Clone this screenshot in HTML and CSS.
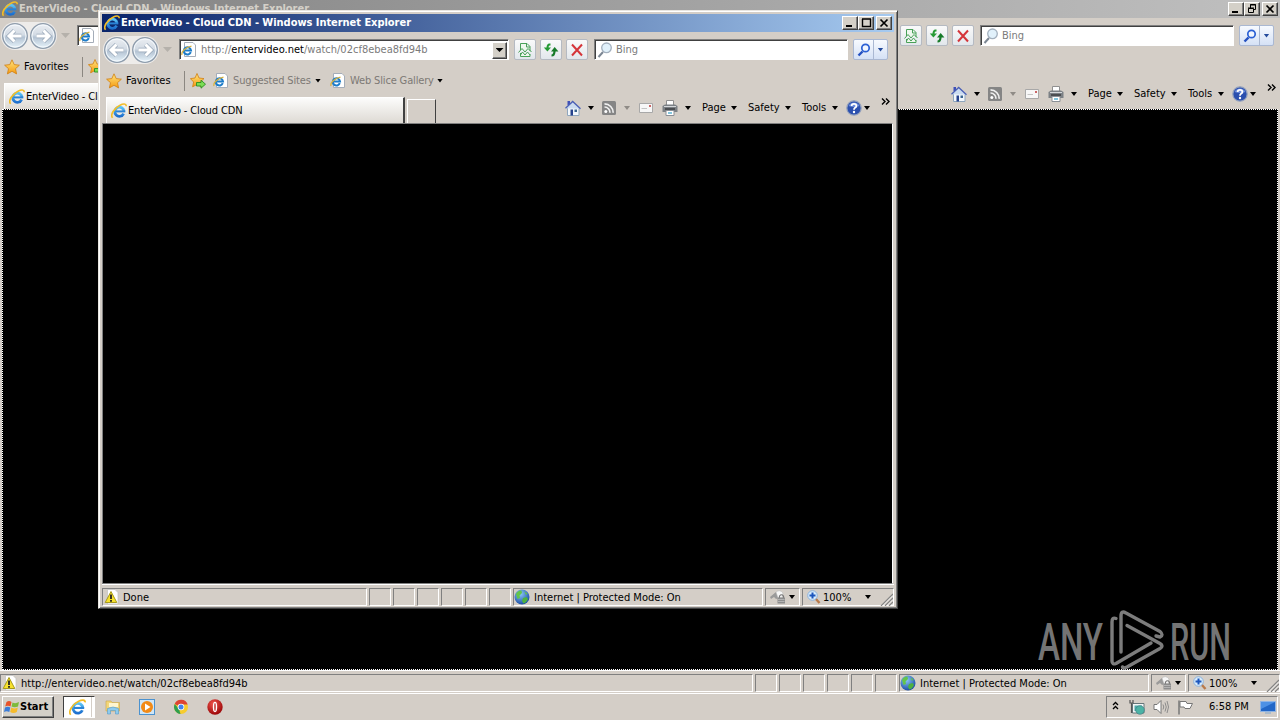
FILE: index.html
```html
<!DOCTYPE html>
<html lang="en">
  <head>
    <meta charset="UTF-8" />
    <title>EnterVideo - Cloud CDN</title>
    <link rel="stylesheet" href="styles.css">
  </head>
  <body>
    <svg class="sprite" xmlns="http://www.w3.org/2000/svg">
      <defs>
        <linearGradient id="blue" x1="0" y1="0" x2="0" y2="1">
          <stop offset="0" stop-color="#5bc4f5" />
          <stop offset="1" stop-color="#1d6fce" />
        </linearGradient>
        <linearGradient id="glass" x1="0" y1="0" x2="0" y2="1">
          <stop offset="0" stop-color="#eceff3" />
          <stop offset="0.45" stop-color="#d3dbe4" />
          <stop offset="0.55" stop-color="#b4c3d3" />
          <stop offset="1" stop-color="#e8f5fc" />
        </linearGradient>
        <linearGradient id="gold" x1="0" y1="0" x2="0" y2="1">
          <stop offset="0" stop-color="#ffe680" />
          <stop offset="1" stop-color="#f59a10" />
        </linearGradient>
        <radialGradient id="red" cx="0.4" cy="0.3" r="0.7">
          <stop offset="0" stop-color="#f0564c" />
          <stop offset="1" stop-color="#9c0608" />
        </radialGradient>
        <radialGradient id="globe" cx="0.4" cy="0.3" r="0.7">
          <stop offset="0" stop-color="#8cc8f8" />
          <stop offset="1" stop-color="#1d4fa6" />
        </radialGradient>
      </defs>
      <symbol id="ie" viewBox="0 0 16 16">
        <path d="M12.600 10.600A4.600 4.600 0 1 1 13 8.400" fill="none" stroke="url(#blue)" stroke-width="2.700" />
        <path d="M4.600 8.400H14.300" stroke="#2a83d6" stroke-width="2" />
        <path d="M1.600 14.800C-1 12 3 5 9 2.200C12 .6 15.300.2 15.200 3.200" fill="none" stroke="#f3bd27" stroke-width="1.600" />
      </symbol>
      <symbol id="iepage" viewBox="0 0 16 16">
        <path d="M3.500 .5H12L14.500 3V14.500H3.500Z" fill="#fff" stroke="#a5adb8" />
        <path d="M9.800 10.200A3.600 3.600 0 1 1 10 8.400H4" fill="none" stroke="#1d7cc9" stroke-width="2" />
        <path d="M1 13C0 10 4 5.500 10.500 4.200" fill="none" stroke="#d9b23c" stroke-width="1.200" />
      </symbol>
      <symbol id="star" viewBox="0 0 16 16">
        <path d="M8 .8L10.200 5.600L15.400 6.200L11.500 9.700L12.600 14.900L8 12.300L3.400 14.900L4.500 9.700L.6 6.200L5.800 5.600Z" fill="url(#gold)" stroke="#d07f12" stroke-width=".8" />
      </symbol>
      <symbol id="addstar" viewBox="0 0 16 16">
        <path d="M7 .5L9 5L14 5.600L10.400 9L11.400 13.800L7 11.500L2.600 13.800L3.600 9L.4 5.600L5 5Z" fill="url(#gold)" stroke="#d07f12" stroke-width=".8" />
        <path d="M6.500 9.500H11V7.200L15.500 11.200L11 15.200V13H6.500Z" fill="#7bdc54" stroke="#2b8f22" stroke-width=".9" />
      </symbol>
      <symbol id="back" viewBox="0 0 28 28">
        <circle cx="14" cy="14" r="12.300" fill="url(#glass)" stroke="#8d9bab" stroke-width="1.300" />
        <circle cx="14" cy="14" r="11" fill="none" stroke="#f4f9fd" stroke-width="1" />
        <path d="M13.500 8.500L8 14L13.500 19.500M8.500 14H20.500" fill="none" stroke="#98a7b8" stroke-width="4.400" />
        <path d="M13.500 8.500L8 14L13.500 19.500M8.500 14H20.500" fill="none" stroke="#fff" stroke-width="3" />
      </symbol>
      <symbol id="broken" viewBox="0 0 16 16">
        <path d="M3.500 8V1.500H10L13 4.500V9M9.500 1.500V5H13M3.500 11V14.500H13V12" fill="#eef8ee" stroke="#49a158" />
        <path d="M1.500 10.500L5 6.500L8 10L11 6.500L14.500 10M3.500 13L5.500 10L8 13L10.500 10L13 13" fill="none" stroke="#49a158" />
      </symbol>
      <symbol id="refresh" viewBox="0 0 16 16">
        <path d="M7.500 2.500H6.500Q4.500 2.500 4.500 6" fill="none" stroke="#279b35" stroke-width="2" />
        <path d="M.8 5.500H8L4.400 9.500Z" fill="#279b35" />
        <path d="M8.500 13.500Q11.500 13.500 11.500 9" fill="none" stroke="#167a28" stroke-width="2.200" />
        <path d="M8 9.500L11.700 5L15.400 9.500Z" fill="#167a28" />
      </symbol>
      <symbol id="stop" viewBox="0 0 16 16">
        <path d="M3 2.500L13 13.500M13 2.500L3 13.500" fill="none" stroke="#d5353a" stroke-width="2" />
      </symbol>
      <symbol id="lens" viewBox="0 0 16 16">
        <path d="M6 10L1.500 15" stroke="#7c8794" stroke-width="2" />
        <circle cx="9.500" cy="5.800" r="4.800" fill="#e1f1fb" stroke="#a3b0be" stroke-width="1.300" />
      </symbol>
      <symbol id="find" viewBox="0 0 16 16">
        <path d="M6.500 9.500L2.500 13.500" stroke="#2450c0" stroke-width="2.400" />
        <circle cx="9.500" cy="6" r="3.700" fill="#f1f6ff" stroke="#2b60d4" stroke-width="1.700" />
      </symbol>
      <symbol id="home" viewBox="0 0 16 16">
        <path d="M2.500 7.500H14V15.500H2.500Z" fill="#f2f7fc" stroke="#8fa6bd" />
        <path d="M2.500 1H5V5H2.500Z" fill="#3e50b8" />
        <path d="M.5 8.300L7.700 1.500L15.500 8.800" fill="#cbdcf0" stroke="#4a5fb5" stroke-width="1.300" />
        <path d="M5.500 9.500H8V15.500H5.500Z" fill="#26428d" />
        <path d="M9.500 9.500H12V12H9.500Z" fill="#39638f" />
      </symbol>
      <symbol id="rss" viewBox="0 0 16 16">
        <rect x="1" y="1" width="14" height="14" rx="1.500" fill="#858585" />
        <circle cx="4.800" cy="11.500" r="1.500" fill="#fff" />
        <path d="M3.500 7A5.500 5.500 0 0 1 9 12.800M3.500 3.800A8.800 8.800 0 0 1 12.200 12.800" fill="none" stroke="#f0f0f0" stroke-width="1.700" />
      </symbol>
      <symbol id="mail" viewBox="0 0 16 16">
        <path d="M1.500 3.500H14.500V12.500H1.500Z" fill="#f7f7f7" stroke="#a8a8a8" />
        <path d="M11 5H13V7H11Z" fill="#c66" />
        <path d="M3.500 8.500H9" stroke="#c4c4c4" />
      </symbol>
      <symbol id="printer" viewBox="0 0 16 16">
        <path d="M4.500 .5H11.500V6H4.500Z" fill="#fff" stroke="#909090" />
        <path d="M.5 6L3 4.500H13L15.500 6V12H.5Z" fill="#7b8085" />
        <path d="M2 6.500H14" stroke="#d5d8db" />
        <path d="M3 9H13" stroke="#3b3e42" stroke-width="1.500" />
        <path d="M4 10.500H12V15.500H4Z" fill="#fff" stroke="#8b9096" />
        <path d="M6 13H10" stroke="#5db3d5" stroke-width="1.500" />
      </symbol>
      <symbol id="help" viewBox="0 0 16 16">
        <circle cx="8" cy="8" r="7.200" fill="#2b4fae" stroke="#93a1bd" stroke-width="1.200" />
        <path d="M2.500 6A6 6 0 0 1 13.500 6Q8 8 2.500 6" fill="#6d8ddb" />
        <path d="M5.600 6Q5.600 3.800 8 3.800T10.400 6Q10.400 7 9 7.800Q8 8.500 8 9.800" fill="none" stroke="#fff" stroke-width="1.800" />
        <circle cx="8" cy="12" r="1.200" fill="#fff" />
      </symbol>
      <symbol id="warn" viewBox="0 0 16 16">
        <path d="M4.500 .5H12L15 3.500V15H4.500Z" fill="#fff" stroke="#c0c0c0" stroke-width=".7" />
        <path d="M8 2.500L13.800 13.500H2.200Z" fill="#f7e12c" stroke="#a79a1c" />
        <path d="M8 5.500V10M8 11V12.700" stroke="#222" stroke-width="1.800" />
      </symbol>
      <symbol id="earth" viewBox="0 0 16 16">
        <circle cx="8" cy="8" r="7.500" fill="url(#globe)" />
        <path d="M2 5Q4 1 7.500 1.500L8 4L5.500 6.500L6 9L3.500 10Z" fill="#63c54a" />
        <path d="M9 9L12.500 8L14 10Q12 14 9.500 14.500L8 12Z" fill="#4db140" />
        <path d="M10.500 2.500L13.500 4.500L12 6Z" fill="#63c54a" />
      </symbol>
      <symbol id="lock" viewBox="0 0 18 16">
        <path d="M1 8L7 3L10 9L7 10L5 8L2 10Z" fill="#9a9a9a" />
        <path d="M7 3Q11 0 14 4L13 9H9Z" fill="#f7f7f7" stroke="#bbb" stroke-width=".6" />
        <path d="M10.500 9V7Q12.500 4.500 14.500 7V9" fill="none" stroke="#777" stroke-width="1.200" />
        <path d="M8.500 8.500H16V14.500H8.500Z" fill="#8d8d8d" />
        <path d="M9 10.500H15.500M9 12.500H15.500" stroke="#bcbcbc" stroke-width=".8" />
      </symbol>
      <symbol id="zoomin" viewBox="0 0 14 14">
        <path d="M8.500 8.500L12.500 13" stroke="#b97a4a" stroke-width="2.400" />
        <circle cx="5.500" cy="5.500" r="4.800" fill="#d7ebfb" stroke="#8cb2dc" />
        <path d="M5.500 2.500V8.500M2.500 5.500H8.500" stroke="#1c56bd" stroke-width="2" />
      </symbol>
      <symbol id="grip" viewBox="0 0 13 13">
        <path d="M1 13L13 1M5 13L13 5M9 13L13 9" stroke="#858585" stroke-width="1.300" />
        <path d="M2.500 13L13 2.500M6.500 13L13 6.500M10.500 13L13 10.500" stroke="#fff" stroke-width=".8" />
      </symbol>
    </svg>

    <div class="desktop">
      <!-- maximized window -->
      <div class="window main">
        <div class="titlebar inactive">
          <svg class="i16"><use href="#ie" /></svg>
          <span class="caption">EnterVideo - Cloud CDN - Windows Internet Explorer</span>
          <div class="controls">
            <button><svg viewBox="0 0 12 10"><path d="M2 8H8" stroke="#000" stroke-width="2" /></svg></button>
            <button><svg viewBox="0 0 12 10"><path d="M4.500 4V.5H9.500V5.500H7.500M4 1H10M2.500 4.500H7.500V8.500H2.500ZM2 4H8" fill="none" stroke="#000" /></svg></button>
            <button class="close"><svg viewBox="0 0 12 10"><path d="M2.500 1.500L9.500 8.500M9.500 1.500L2.500 8.500" stroke="#000" stroke-width="1.700" /></svg></button>
          </div>
        </div>
        <div class="navbar">
          <div class="travel">
            <svg><use href="#back" /></svg>
            <svg class="forward"><use href="#back" /></svg>
          </div>
          <i class="arrow dim"></i>
          <div class="address">
            <svg class="i16"><use href="#iepage" /></svg>
            <button class="drop"><i class="arrow"></i></button>
          </div>
          <button class="tool"><svg class="i16"><use href="#broken" /></svg></button>
          <button class="tool"><svg class="i16"><use href="#refresh" /></svg></button>
          <button class="tool"><svg class="i16"><use href="#stop" /></svg></button>
          <div class="search"><svg class="i16"><use href="#lens" /></svg><span>Bing</span></div>
          <button class="go"><svg class="i16"><use href="#find" /></svg><b><i class="arrow navy"></i></b></button>
        </div>
        <div class="favbar">
          <svg class="i16"><use href="#star" /></svg>
          <span class="favorites">Favorites</span>
          <svg class="i16"><use href="#addstar" /></svg>
        </div>
        <div class="tabrow">
          <div class="tab"><svg class="i16"><use href="#ie" /></svg><span>EnterVideo - Cloud CDN</span></div>
          <div class="newtab"></div>
          <div class="commands">
            <svg class="i16"><use href="#home" /></svg><i class="arrow a1"></i>
            <svg class="i16 c-rss"><use href="#rss" /></svg><i class="arrow a1 dim2"></i>
            <svg class="i16 c-mail"><use href="#mail" /></svg>
            <svg class="i16 c-print"><use href="#printer" /></svg><i class="arrow a2"></i>
            <span class="menu page-menu">Page</span><i class="arrow"></i>
            <span class="menu safety-menu">Safety</span><i class="arrow"></i>
            <span class="menu tools-menu">Tools</span><i class="arrow"></i>
            <svg class="i16 c-help"><use href="#help" /></svg><i class="arrow a3"></i>
            <svg class="more" viewBox="0 0 9 7"><path d="M1 .5L4 3.500L1 6.500M5 .5L8 3.500L5 6.500" fill="none" stroke="#000" stroke-width="1.400" /></svg>
          </div>
        </div>
        <div class="page"><div class="focus"></div></div>
        <div class="statusbar">
          <div class="cell message"><svg class="i16"><use href="#warn" /></svg><span class="link">http://entervideo.net/watch/02cf8ebea8fd94b</span></div>
          <div class="cell small"></div>
          <div class="cell small"></div>
          <div class="cell small"></div>
          <div class="cell small"></div>
          <div class="cell small"></div>
          <div class="cell small"></div>
          <div class="cell zone"><svg class="i16"><use href="#earth" /></svg><span>Internet | Protected Mode: On</span></div>
          <div class="cell protect"><svg><use href="#lock" /></svg><i class="arrow"></i></div>
          <div class="cell zoom"><svg class="i14"><use href="#zoomin" /></svg><span>100%</span><i class="arrow"></i><svg class="grip"><use href="#grip" /></svg></div>
        </div>
      </div>

      <!-- taskbar -->
      <div class="taskbar">
        <button class="start">
          <svg viewBox="0 0 16 16">
            <path d="M2.500 3Q5 1 7.500 3L6.500 7.500Q4 5.800 1.200 7.500Z" fill="#e8532a" />
            <path d="M8.500 3.500Q11.500 5 15 3L14 7.500Q10.500 9 7.500 7.500Z" fill="#7dba3c" />
            <path d="M1 8.500Q4 6.800 6.300 8.500L5.300 13Q2.500 11.300 0 13Z" fill="#3b7cd8" />
            <path d="M7.300 8.500Q10.500 10.300 13.800 8.500L12.800 13Q9.500 14.800 6.200 13Z" fill="#f6bb2c" />
          </svg>
          <span>Start</span>
        </button>
        <div class="task active"><div><svg><use href="#ie" /></svg></div></div>
        <div class="pinned">
          <svg viewBox="0 0 16 16">
            <path d="M1 2H6L7 3.500H14.500V12H1Z" fill="#f2d679" stroke="#caa648" stroke-width=".6" />
            <path d="M4 4H13V8H4Z" fill="#fff6cf" />
            <path d="M2.500 15V9.500Q8 6.500 13.500 9.500V15H10.500V11.500H5.500V15Z" fill="#8dcbee" stroke="#569bc9" stroke-width=".6" />
          </svg>
          <svg viewBox="0 0 16 16">
            <rect x=".5" y=".5" width="15" height="15" fill="#cfe6f7" stroke="#4b92cf" />
            <circle cx="8" cy="8" r="6" fill="#f28a16" />
            <path d="M6 4.500L11.500 8L6 11.500Z" fill="#fff" />
          </svg>
          <svg viewBox="0 0 16 16">
            <circle cx="8" cy="8" r="7" fill="#f7cc2e" />
            <path d="M8 8L1.700 5A7 7 0 0 1 14.700 5.500H8Z" fill="#dd4434" />
            <path d="M1.700 5L6 10L7.500 15A7 7 0 0 1 1.700 5Z" fill="#2f9e4f" />
            <circle cx="8" cy="8" r="3.300" fill="#fff" />
            <circle cx="8" cy="8" r="2.500" fill="#4384ee" />
          </svg>
          <svg viewBox="0 0 16 16">
            <circle cx="8" cy="8" r="7.700" fill="url(#red)" />
            <ellipse cx="8" cy="8" rx="2.200" ry="5.200" fill="#fff" />
            <ellipse cx="8" cy="8" rx=".8" ry="4" fill="#c43b36" />
          </svg>
        </div>
        <div class="tray">
          <svg class="up" viewBox="0 0 7 9"><path d="M1 4L3.500 1.500L6 4M1 8L3.500 5.500L6 8" fill="none" stroke="#000" stroke-width="1.300" /></svg>
          <svg class="net" viewBox="0 0 16 16">
            <path d="M3.500 4.500H15V14H3.500Z" fill="#f2f5f5" stroke="#65767a" />
            <path d="M5.500 6.500H13V12H5.500Z" fill="#4caaa9" />
            <circle cx="11" cy="11" r="4.300" fill="#4cb3a5" stroke="#39777f" stroke-width=".6" />
            <path d="M1 1V4H4V1M2.500 4V14" fill="none" stroke="#555" stroke-width="1.200" />
          </svg>
          <svg class="sound" viewBox="0 0 16 16">
            <path d="M1 5.500H4L8 1.500V14.500L4 10.500H1Z" fill="#fff" stroke="#777" />
            <path d="M10 5.500Q11.500 8 10 10.500M12 3.500Q14.500 8 12 12.500M14 2Q17 8 14 14" fill="none" stroke="#8b8b8b" />
          </svg>
          <svg class="flag" viewBox="0 0 16 16">
            <path d="M2 1.500V15.500" stroke="#777" stroke-width="1.500" />
            <path d="M3 2.500H9L10 4.500H15.500L13 9.500H8L7 8H3Z" fill="#fff" stroke="#777" />
          </svg>
          <span class="clock">6:58 PM</span>
          <svg class="show" viewBox="0 0 16 16">
            <path d="M.5 2.500H15.500V12.500H.5Z" fill="#2267c7" stroke="#8fb4e4" />
            <path d="M1 3H15L1 10Z" fill="#4d91e5" />
            <path d="M5 14H11" stroke="#9eb4cb" stroke-width="1.500" />
          </svg>
        </div>
      </div>

      <!-- watermark over the page -->
      <svg class="watermark" viewBox="0 0 204 68">
        <text x="5" y="53.500" textLength="65" lengthAdjust="spacingAndGlyphs">ANY</text>
        <g transform="translate(4 4)" fill="none" stroke="#7c7c7c" stroke-width="3.400" stroke-linejoin="round" stroke-linecap="round">
          <path d="M79 8.500Q75 7 75 12V51Q75 55 79 53.500L114 33" />
          <path d="M84 42V6Q84 0 89 3L123 21.500Q127 25 123 27L119 26" />
          <path d="M90 15.500L123 33.500Q127 36 123 38.500L90 57Q86 59 85.500 57" />
        </g>
        <text x="137" y="53.500" textLength="61" lengthAdjust="spacingAndGlyphs">RUN</text>
      </svg>

      <!-- popup window -->
      <div class="frame">
        <div class="window popup">
          <div class="titlebar">
            <svg class="i16"><use href="#ie" /></svg>
            <span class="caption">EnterVideo - Cloud CDN - Windows Internet Explorer</span>
            <div class="controls">
              <button><svg viewBox="0 0 12 10"><path d="M2 8H8" stroke="#000" stroke-width="2" /></svg></button>
              <button><svg viewBox="0 0 12 10"><path d="M2.500 1V8.500H10.500V1M2 1H11" fill="none" stroke="#000" stroke-width="1.400" /></svg></button>
              <button class="close"><svg viewBox="0 0 12 10"><path d="M2.500 1.500L9.500 8.500M9.500 1.500L2.500 8.500" stroke="#000" stroke-width="1.700" /></svg></button>
            </div>
          </div>
          <div class="navbar">
            <div class="travel">
              <svg><use href="#back" /></svg>
              <svg class="forward"><use href="#back" /></svg>
            </div>
            <i class="arrow dim"></i>
            <div class="address">
              <svg class="i16"><use href="#iepage" /></svg>
              <span class="link">http://<em>entervideo.net</em>/watch/02cf8ebea8fd94b</span>
              <button class="drop"><i class="arrow"></i></button>
            </div>
            <button class="tool"><svg class="i16"><use href="#broken" /></svg></button>
            <button class="tool"><svg class="i16"><use href="#refresh" /></svg></button>
            <button class="tool"><svg class="i16"><use href="#stop" /></svg></button>
            <div class="search"><svg class="i16"><use href="#lens" /></svg><span>Bing</span></div>
            <button class="go"><svg class="i16"><use href="#find" /></svg><b><i class="arrow navy"></i></b></button>
          </div>
          <div class="favbar">
            <svg class="i16"><use href="#star" /></svg>
            <span class="favorites">Favorites</span>
            <svg class="i16"><use href="#addstar" /></svg>
            <svg class="i16 site"><use href="#iepage" /></svg>
            <span class="sites">Suggested Sites</span><i class="arrow"></i>
            <svg class="i16 slice"><use href="#iepage" /></svg>
            <span class="gallery">Web Slice Gallery</span><i class="arrow"></i>
          </div>
          <div class="tabrow">
            <div class="tab"><svg class="i16"><use href="#ie" /></svg><span>EnterVideo - Cloud CDN</span></div>
            <div class="newtab"></div>
            <div class="commands">
              <svg class="i16"><use href="#home" /></svg><i class="arrow a1"></i>
              <svg class="i16 c-rss"><use href="#rss" /></svg><i class="arrow a1 dim2"></i>
              <svg class="i16 c-mail"><use href="#mail" /></svg>
              <svg class="i16 c-print"><use href="#printer" /></svg><i class="arrow a2"></i>
              <span class="menu page-menu">Page</span><i class="arrow"></i>
              <span class="menu safety-menu">Safety</span><i class="arrow"></i>
              <span class="menu tools-menu">Tools</span><i class="arrow"></i>
              <svg class="i16 c-help"><use href="#help" /></svg><i class="arrow a3"></i>
              <svg class="more" viewBox="0 0 9 7"><path d="M1 .5L4 3.500L1 6.500M5 .5L8 3.500L5 6.500" fill="none" stroke="#000" stroke-width="1.400" /></svg>
            </div>
          </div>
          <div class="page"></div>
          <div class="statusbar">
            <div class="cell message"><svg class="i16"><use href="#warn" /></svg><span>Done</span></div>
            <div class="cell small"></div>
            <div class="cell small"></div>
            <div class="cell small"></div>
            <div class="cell small"></div>
            <div class="cell small"></div>
            <div class="cell small"></div>
            <div class="cell zone"><svg class="i16"><use href="#earth" /></svg><span>Internet | Protected Mode: On</span></div>
            <div class="cell protect"><svg><use href="#lock" /></svg><i class="arrow"></i></div>
            <div class="cell zoom"><svg class="i14"><use href="#zoomin" /></svg><span>100%</span><i class="arrow"></i><svg class="grip"><use href="#grip" /></svg></div>
          </div>
        </div>
      </div>
    </div>
  </body>
</html>
```
FILE: styles.css
```css
* {
  box-sizing: border-box;
}
body {
  margin: 0;
  background: #000;
  color: #000;
  font-family: Tahoma, "DejaVu Sans Condensed", "DejaVu Sans", sans-serif;
  font-stretch: condensed;
  font-size: 11px;
  line-height: 14px;
  white-space: nowrap;
}
button {
  padding: 0;
  margin: 0;
  border: 0;
  font: inherit;
  color: inherit;
  background: #d4d0c8;
}
svg {
  display: block;
  flex: none;
}
.sprite {
  position: absolute;
  width: 0;
  height: 0;
}
.i16 {
  width: 16px;
  height: 16px;
}
.i14 {
  width: 14px;
  height: 14px;
}
.desktop {
  position: relative;
  width: 1280px;
  height: 720px;
  overflow: hidden;
  display: flex;
  flex-direction: column;
}
.window {
  display: flex;
  flex-direction: column;
  background: #d4cec7;
}
.main {
  height: 693px;
}
.frame {
  position: absolute;
  left: 98px;
  top: 10px;
  width: 800px;
  height: 599px;
  padding: 2px 2px 0;
  background: #d4cec7;
  border: 1px solid;
  border-color: #e8e5e0 #404040 #404040 #e8e5e0;
  box-shadow: inset 1px 1px #fff, inset -1px -1px #808080;
}
.popup {
  padding: 1px 1px 0;
  height: 594px;
}

/* title bar */
.titlebar {
  height: 18px;
  flex: none;
  display: flex;
  align-items: center;
  padding: 0 2px 0 2px;
  background: linear-gradient(to right, #0a246a, #a6caf0);
  color: #fff;
  font-weight: bold;
}
.titlebar.inactive {
  background: linear-gradient(to right, #808080, #c0c0c0);
  color: #d4d0c8;
}
.caption {
  margin-left: 1px;
  letter-spacing: -0.04px;
}
.controls {
  display: flex;
  margin-left: auto;
}
.controls button {
  width: 16px;
  height: 14px;
  padding: 1px;
  border: 1px solid;
  border-color: #fff #404040 #404040 #fff;
  box-shadow: inset -1px -1px #808080;
}
.controls svg {
  width: 12px;
  height: 10px;
}
.controls .close {
  margin-left: 2px;
}

/* navigation */
.navbar {
  height: 35px;
  flex: none;
  display: flex;
  align-items: center;
  padding: 0 6px 0 1px;
}
.travel {
  display: flex;
  margin-right: 4px;
  border-radius: 14px;
  background: #eeecea;
}
.travel svg {
  width: 28px;
  height: 28px;
}
.forward {
  transform: scaleX(-1);
}
.arrow {
  flex: none;
  width: 6px;
  height: 4px;
  background: #000;
  clip-path: polygon(0 0, 100% 0, 50% 100%);
}
.arrow.dim {
  width: 9px;
  height: 5px;
  margin-right: 7px;
  background: #b5b1ab;
}
.arrow.dim2 {
  background: #8f8b86;
}
.arrow.navy {
  background: #254b9c;
}
.address,
.search {
  display: flex;
  align-items: center;
  height: 21px;
  background: #fff;
  border: 1px solid;
  border-color: #808080 #fff #fff #808080;
  box-shadow: inset 1px 1px #404040;
  color: #7b7b7b;
}
.address {
  flex: 1;
  padding: 2px 1px 1px 1px;
  margin-right: 5px;
}
.address em {
  font-style: normal;
  color: #000;
}
.address .link {
  margin-left: 4px;
}
.drop {
  width: 15px;
  height: 17px;
  margin-left: auto;
  display: flex;
  align-items: center;
  justify-content: center;
  border: 1px solid;
  border-color: #fff #404040 #404040 #fff;
  box-shadow: inset -1px -1px #808080;
}
.drop .arrow {
  width: 8px;
  height: 4px;
}
.tool {
  width: 22px;
  height: 21px;
  margin-right: 4px;
  display: flex;
  align-items: center;
  justify-content: center;
  border: 1px solid #b5bac2;
  border-radius: 2px;
  background: linear-gradient(#fafafa, #e2e7ec);
}
.search {
  width: 254px;
  margin-left: 2px;
  margin-right: 5px;
  padding-left: 2px;
}
.search span {
  margin-left: 3px;
}
.go {
  display: flex;
  align-items: center;
  width: 35px;
  height: 21px;
  padding-left: 2px;
  border: 1px solid #aab8d2;
  border-radius: 2px;
  background: linear-gradient(#f7faff, #d5e1f5);
}
.go b {
  width: 14px;
  height: 19px;
  margin-left: auto;
  border-left: 1px solid #aab8d2;
  display: flex;
  align-items: center;
  justify-content: center;
}

/* favorites */
.favbar {
  height: 27px;
  flex: none;
  display: flex;
  align-items: center;
  padding-left: 4px;
}
.favorites {
  width: 59px;
  height: 20px;
  line-height: 20px;
  margin: 0 5px 0 4px;
  border-right: 1px solid #8b8781;
}
.sites,
.gallery {
  color: #7d7975;
}
.sites,
.gallery {
  letter-spacing: -0.15px;
}
.site {
  margin-left: 7px;
}
.sites {
  width: 79px;
  margin: 0 3px 0 4px;
}
.slice {
  margin-left: 9px;
}
.gallery {
  width: 84px;
  margin: 0 3px 0 4px;
}

/* tabs and command bar */
.tabrow {
  height: 29px;
  flex: none;
  display: flex;
  align-items: flex-end;
  padding-left: 4px;
}
.tab {
  width: 299px;
  height: 26px;
  display: flex;
  align-items: center;
  padding: 0 0 0 4px;
  background: linear-gradient(#fcfcfb, #dedad4);
  border-right: 2px solid #404040;
  border-top: 1px solid #fff;
  border-left: 1px solid #fff;
}
.tab span {
  margin-left: 1px;
  letter-spacing: -0.14px;
}
.newtab {
  width: 29px;
  height: 24px;
  margin-left: 2px;
  border: 1px solid #fff;
  border-bottom: 0;
  border-right-color: #404040;
}
.commands {
  height: 26px;
  margin-left: auto;
  margin-bottom: 2px;
  display: flex;
  align-items: center;
}
.a1 {
  margin-left: 7px;
}
.c-rss {
  margin-left: 7px;
}
.c-mail {
  margin-left: 8px;
}
.c-print {
  margin-left: 8px;
}
.a2 {
  margin-left: 7px;
}
.menu {
  margin-right: 3px;
}
.page-menu {
  width: 26px;
  margin-left: 11px;
}
.safety-menu {
  width: 34px;
  margin-left: 11px;
}
.tools-menu {
  width: 27px;
  margin-left: 11px;
}
.c-help {
  margin-left: 8px;
}
.a3 {
  margin-left: 2px;
}
.more {
  width: 9px;
  height: 7px;
  margin: 0 4px 14px 11px;
}

/* page area */
.page {
  flex: 1;
  margin: 0 1px 0 0;
  background: #000;
  border: 1px solid #808080;
  border-right: 1px solid #fff;
}
.main .page {
  margin: 0;
  padding: 0;
  border-width: 0 2px;
  border-color: #808080 #d4cec7;
}
.focus {
  height: 100%;
  border: 1px dotted #fff;
}

/* status bar */
.statusbar {
  height: 23px;
  flex: none;
  display: flex;
  gap: 2px;
  padding: 3px 0 1px;
  border-top: 1px solid #fff;
}
.cell {
  display: flex;
  align-items: center;
  border: 1px solid;
  border-color: #808080 #fff #fff #808080;
}
.message {
  flex: 1;
}
.cell span {
  padding-top: 1px;
}
.message span {
  margin-left: 4px;
}
.small {
  width: 22px;
}
.zone {
  width: 250px;
}
.zone span {
  margin-left: 4px;
}
.protect {
  width: 35px;
  padding-left: 3px;
}
.protect svg {
  width: 18px;
  height: 16px;
  margin-right: 2px;
}
.zoom {
  width: 92px;
  padding-left: 4px;
}
.zoom span {
  width: 42px;
  margin-left: 2px;
}
.grip {
  width: 13px;
  height: 13px;
  margin: 4px 0 0 auto;
}

/* taskbar */
.taskbar {
  height: 27px;
  flex: none;
  display: flex;
  align-items: center;
  padding: 0 2px;
  background: #d4cec7;
  border-top: 1px solid #fff;
}
.start {
  width: 52px;
  height: 22px;
  display: flex;
  align-items: center;
  padding-left: 1px;
  font-weight: bold;
  border: 1px solid;
  border-color: #fff #404040 #404040 #fff;
  box-shadow: inset -1px -1px #808080;
}
.start svg {
  width: 16px;
  height: 16px;
}
.task {
  width: 32px;
  height: 22px;
  margin-left: 9px;
  border: 1px solid;
  border-color: #404040 #fff #fff #404040;
  background: #fff;
}
.task div {
  width: 28px;
  height: 20px;
  padding: 2px 0 0 5px;
  border-right: 1px solid #d4cec7;
}
.task svg {
  width: 17px;
  height: 17px;
}
.pinned {
  display: flex;
  gap: 18px;
  margin-left: 10px;
}
.pinned svg {
  width: 16px;
  height: 16px;
}
.tray {
  width: 172px;
  height: 22px;
  margin-left: auto;
  display: flex;
  align-items: center;
  padding-left: 5px;
  border: 1px solid;
  border-color: #808080 #fff #fff #808080;
}
.tray svg {
  width: 16px;
  height: 16px;
}
.tray .up {
  width: 7px;
  height: 9px;
  margin: 0 10px 4px 0;
}
.tray .sound {
  margin-left: 8px;
}
.tray .flag {
  margin-left: 8px;
}
.tray .clock {
  width: 42px;
  margin: 0 9px 0 16px;
}

.watermark {
  position: absolute;
  left: 1033px;
  top: 606px;
  width: 204px;
  height: 68px;
  overflow: visible;
}
.watermark text {
  font-family: Roboto, sans-serif;
  font-stretch: normal;
  font-size: 52px;
  font-weight: 500;
  fill: #747474;
}
```
